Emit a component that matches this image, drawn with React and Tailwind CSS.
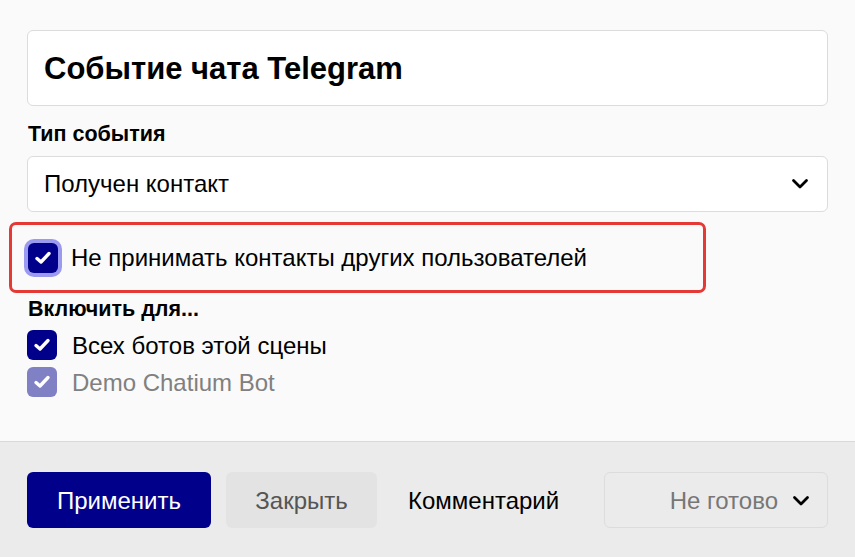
import React, { useState } from 'react';

const Chevron = ({ className = '' }) => (
  <svg width="18" height="12" viewBox="0 0 18 12" className={className}>
    <path d="M2.5 2.5 L9 9 L15.5 2.5" fill="none" stroke="#000" strokeWidth="2.8" strokeLinecap="round" strokeLinejoin="round" />
  </svg>
);

const Check = () => (
  <svg width="18" height="16" viewBox="0 0 18 16">
    <path d="M3 8.5 L7 12 L15 3.5" fill="none" stroke="#fff" strokeWidth="3.4" strokeLinecap="round" strokeLinejoin="round" />
  </svg>
);

const Checkbox = ({ checked, disabled, focused }) => (
  <span
    className={
      'flex items-center justify-center w-[30px] h-[30px] rounded-[6px] shrink-0 ' +
      (disabled ? 'bg-[#8080c5]' : 'bg-[#00008b]') +
      (focused ? ' ring-4 ring-[#9a9af0]' : '')
    }
  >
    {checked && <Check />}
  </span>
);

const App = () => {
  const [strict, setStrict] = useState(true);
  const [allBots, setAllBots] = useState(true);

  return (
    <div className="w-[855px] h-[557px] flex flex-col bg-[#fafafa] text-black font-['Liberation_Sans',Arial,sans-serif] overflow-hidden">
      <div className="flex-1 flex flex-col px-[27px] pt-[30px]">
        <div className="h-[76px] flex items-center px-4 bg-white border border-[#dcdcdc] rounded-[6px]">
          <span className="text-[31px] leading-[36px] font-bold pt-0.5">Событие чата Telegram</span>
        </div>

        <div className="mt-[16px] text-[21.5px] font-bold leading-[24px] pl-px">Тип события</div>

        <div className="mt-[10px] h-[56px] flex items-center justify-between pl-4 pr-[18px] bg-white border border-[#dcdcdc] rounded-[6px]">
          <span className="text-[24px] leading-[28px]">Получен контакт</span>
          <Chevron />
        </div>

        <div className="-mx-[18px] mt-[10px] h-[71px] flex items-center gap-[13px] w-[697px] pl-[16px] border-[3px] border-[#e53935] rounded-[7px]">
          <button onClick={() => setStrict(!strict)} className="flex">
            <Checkbox checked={strict} focused />
          </button>
          <span className="text-[24px] leading-[28px]">Не принимать контакты других пользователей</span>
        </div>

        <div className="mt-[4px] text-[21.5px] font-bold leading-[24px] pl-px">Включить для...</div>

        <div className="mt-[9px] flex flex-col gap-[7px]">
          <button onClick={() => setAllBots(!allBots)} className="flex items-center gap-[15px]">
            <Checkbox checked={allBots} />
            <span className="text-[24px] leading-[28px] pt-0.5">Всех ботов этой сцены</span>
          </button>
          <div className="flex items-center gap-[15px]">
            <Checkbox checked disabled />
            <span className="text-[24px] leading-[28px] pt-0.5 text-[#808080]">Demo Chatium Bot</span>
          </div>
        </div>
      </div>

      <div className="h-[116px] shrink-0 flex items-center px-[27px] gap-[15px] bg-[#ebebeb] border-t border-[#d9d9d9]">
        <button className="w-[184px] h-[56px] pt-0.5 rounded-[6px] bg-[#00008b] text-white text-[24px]">Применить</button>
        <button className="w-[151px] h-[56px] pt-0.5 rounded-[6px] bg-[#e3e3e3] text-[#555] text-[24px]">Закрыть</button>
        <button className="ml-4 pt-0.5 text-[24px]">Комментарий</button>
        <div className="ml-auto w-[224px] h-[56px] pt-0.5 flex items-center justify-end gap-[14px] pr-[17px] rounded-[6px] border border-[#dcdcdc]">
          <span className="text-[24px] text-[#777]">Не готово</span>
          <Chevron />
        </div>
      </div>
    </div>
  );
};

export default App;
